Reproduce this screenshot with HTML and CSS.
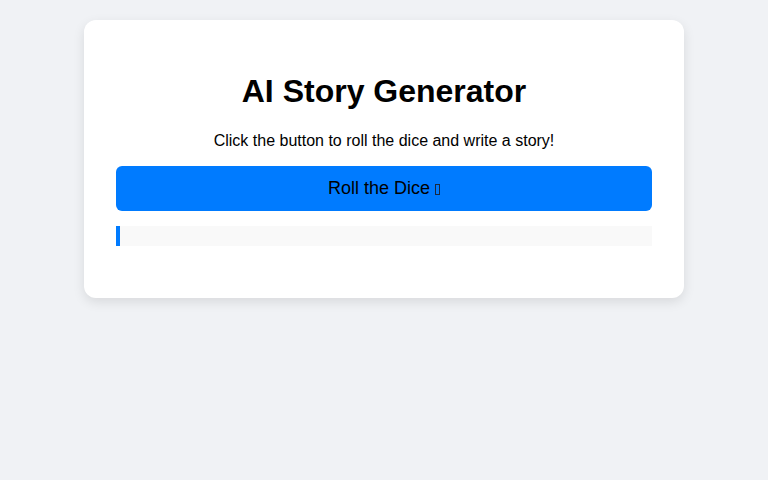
FILE: index.html
```html
<!DOCTYPE html>
<html lang="en">
<head>
  <meta charset="UTF-8" />
  <meta name="viewport" content="width=device-width, initial-scale=1" />
  <title>AI Story Generator</title>
  <link rel="stylesheet" href="styles.css">
</head>
<body>

<div class="container">
  <h1>AI Story Generator</h1>
  <p>Click the button to roll the dice and write a story!</p>
  <button type="button" id="rollBtn">Roll the Dice <span class="dice" aria-hidden="true"></span></button>
  <div class="story" id="story"></div>
</div>

</body>
</html>
```

FILE: styles.css
```css
body {
  font-family: "Liberation Sans", Arial, sans-serif;
  margin: 0;
  padding: 20px;
  background: #f0f2f5;
  color: #000;
}
.container {
  box-sizing: border-box;
  width: 600px;
  margin: 0 auto;
  padding: 32px;
  background: #fff;
  border-radius: 12px;
  box-shadow: 0 4px 12px rgb(0 0 0 / 0.1);
  text-align: center;
}
h1 {
  font-size: 32px;
  margin: 0.67em 0;
}
p {
  font-size: 16px;
  margin: 16px 0;
}
button {
  display: block;
  width: 100%;
  padding: 12px 0;
  background: #007bff;
  border: none;
  border-radius: 6px;
  color: #000;
  font-family: inherit;
  font-size: 18px;
  cursor: pointer;
}
/* missing-glyph box, as the dice shows without an emoji font */
.dice {
  display: inline-block;
  box-sizing: border-box;
  width: 5px;
  height: 11px;
  border: 1px solid #1a2a40;
  vertical-align: -1px;
}
.story {
  margin: 15px 0 20px;
  padding: 10px;
  background: #f9f9f9;
  border-left: 4px solid #007bff;
  text-align: left;
}
```
